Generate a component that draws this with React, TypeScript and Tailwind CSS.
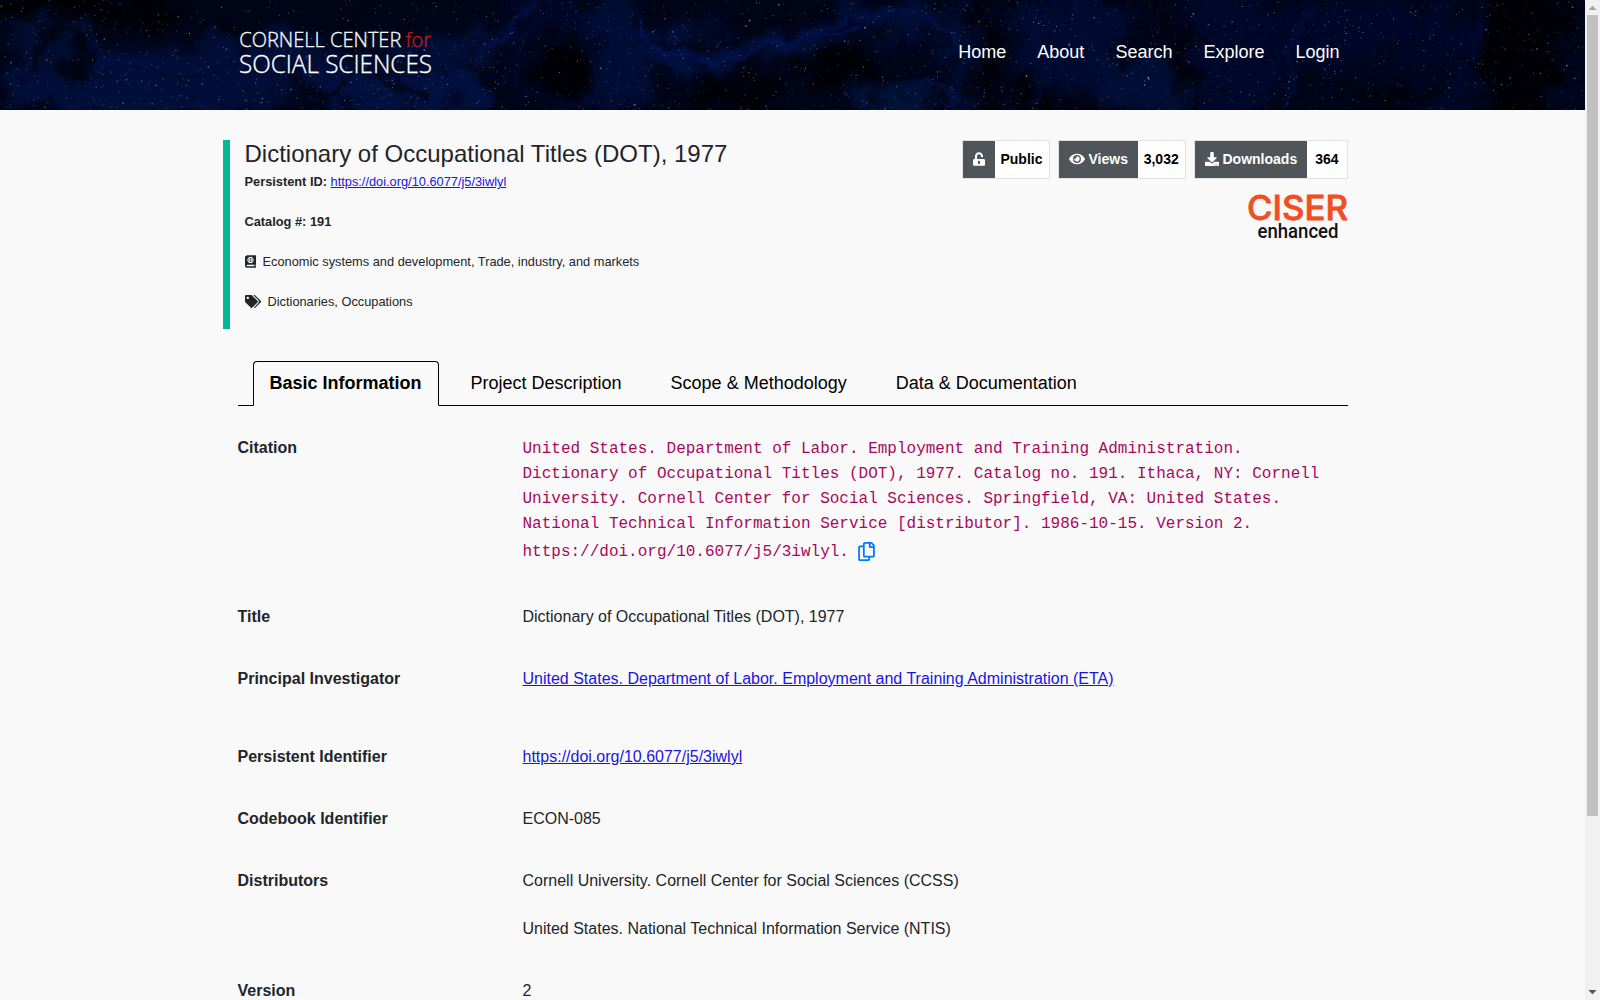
import type { ReactNode } from "react";
import { FaAtlas, FaDownload, FaEye, FaRegCopy, FaTags, FaUnlockAlt } from "react-icons/fa";

const DOI = "https://doi.org/10.6077/j5/3iwlyl";

const NAV = ["Home", "About", "Search", "Explore", "Login"];

const TABS = ["Project Description", "Scope & Methodology", "Data & Documentation"];

const CITATION = [
  "United States. Department of Labor. Employment and Training Administration.",
  "Dictionary of Occupational Titles (DOT), 1977. Catalog no. 191. Ithaca, NY: Cornell",
  "University. Cornell Center for Social Sciences. Springfield, VA: United States.",
  "National Technical Information Service [distributor]. 1986-10-15. Version 2.",
];

// cx, cy, rx, ry, fill
const CLOUDS: [number, number, number, number, string][] = [
  [150, 85, 150, 36, "#000e3a"],
  [50, 45, 38, 30, "#000c30"],
  [250, 60, 90, 28, "#000d36"],
  [400, 88, 90, 26, "#00103f"],
  [440, 48, 60, 14, "#000e36"],
  [560, 45, 60, 60, "#000727"],
  [620, 60, 26, 70, "#000c34"],
  [700, 48, 70, 20, "#000f3e"],
  [780, 42, 60, 10, "#00113f"],
  [575, 98, 24, 18, "#000b32"],
  [890, 20, 60, 14, "#000d36"],
  [890, 104, 46, 14, "#001238"],
  [960, 60, 14, 70, "#000b30"],
  [1070, 40, 55, 50, "#000a30"],
  [1150, 88, 60, 28, "#000e35"],
  [1230, 50, 60, 70, "#000728"],
  [1380, 35, 110, 40, "#000627"],
  [1400, 80, 80, 26, "#000520"],
  [1450, 100, 16, 26, "#000828"],
  [1565, 80, 22, 30, "#000622"],
];

const SHADOWS: [number, number, number, number][] = [
  [80, 6, 110, 16],
  [70, 62, 8, 20],
  [150, 16, 40, 12],
  [225, 33, 28, 7],
  [400, 72, 28, 4],
  [560, 70, 30, 34],
  [720, 40, 46, 4],
  [840, 64, 46, 18],
  [730, 94, 44, 14],
  [985, 60, 8, 70],
  [1040, 98, 26, 12],
  [1185, 50, 8, 40],
  [1390, 92, 50, 8],
  [1520, 30, 44, 110],
];

// thin currents running through the clouds
const CURRENTS: { d: string; stroke: string }[] = [
  { d: "M35 70C40 30 70 20 85 40S75 85 55 72", stroke: "#000209" },
  { d: "M290 65C300 100 330 105 345 85", stroke: "#000209" },
  { d: "M375 72C395 78 400 96 430 98", stroke: "#000209" },
  { d: "M480 60C500 30 520 20 535 0", stroke: "#001450" },
  { d: "M640 20C650 60 700 66 740 56S790 34 860 30", stroke: "#00155a" },
  { d: "M650 35C680 58 720 50 750 34S800 16 830 14", stroke: "#00020c" },
  { d: "M790 42C830 22 870 10 915 16S950 40 952 60", stroke: "#00134a" },
  { d: "M920 80C945 86 955 96 960 110", stroke: "#00134a" },
  { d: "M1030 0C1015 30 1050 60 1030 110", stroke: "#000c35" },
  { d: "M1160 0C1150 30 1200 50 1195 110", stroke: "#00020c" },
  { d: "M1290 110C1295 70 1280 40 1310 15", stroke: "#000d3a" },
  { d: "M1455 110C1460 70 1490 40 1480 0", stroke: "#000a30" },
];

function makeStars(count: number) {
  let seed = 7919;
  const rand = () => {
    seed = (seed * 16807) % 2147483647;
    return seed / 2147483647;
  };
  return Array.from({ length: count }, () => ({
    x: rand() * 1585,
    y: rand() * 110,
    size: rand() > 0.93 ? 1.5 : 1,
    opacity: 0.1 + rand() * rand() * 0.65,
    fill: rand() > 0.6 ? "#d9cbb0" : "#b4c6dc",
  }));
}

const STARS = makeStars(2200);

function NightSky() {
  return (
    <svg className="absolute inset-0 w-full h-full" viewBox="0 0 1585 110" preserveAspectRatio="none" aria-hidden="true">
      <defs>
        <filter id="swirl" x="-50" y="-50" width="1685" height="210" filterUnits="userSpaceOnUse" colorInterpolationFilters="sRGB">
          <feGaussianBlur stdDeviation="7" result="soft" />
          <feTurbulence type="fractalNoise" baseFrequency="0.03" numOctaves="5" seed="8" result="noise" />
          <feDisplacementMap in="soft" in2="noise" scale="55" xChannelSelector="R" yChannelSelector="G" />
        </filter>
        <filter id="current" x="-50" y="-50" width="1685" height="210" filterUnits="userSpaceOnUse" colorInterpolationFilters="sRGB">
          <feGaussianBlur stdDeviation="1.4" result="soft" />
          <feTurbulence type="fractalNoise" baseFrequency="0.04" numOctaves="4" seed="3" result="noise" />
          <feDisplacementMap in="soft" in2="noise" scale="22" xChannelSelector="R" yChannelSelector="G" />
        </filter>
        <filter id="wisps" x="0" y="0" width="1585" height="110" filterUnits="userSpaceOnUse" colorInterpolationFilters="sRGB">
          <feTurbulence type="turbulence" baseFrequency="0.02 0.026" numOctaves="5" seed="21" />
          <feColorMatrix values="0 0 0 0 0  0 0 0 0 0.005  0 0 0 0 0.03  -5 0 0 0 0.7" />
        </filter>
      </defs>
      <rect width="1585" height="110" fill="#00020f" />
      <g filter="url(#swirl)">
        <rect x="-60" y="-60" width="1705" height="230" fill="#000417" />
        {CLOUDS.map(([cx, cy, rx, ry, fill], i) => (
          <ellipse key={i} cx={cx} cy={cy} rx={rx} ry={ry} fill={fill} />
        ))}
        {SHADOWS.map(([cx, cy, rx, ry], i) => (
          <ellipse key={i} cx={cx} cy={cy} rx={rx} ry={ry} fill="#000106" />
        ))}
      </g>
      <g filter="url(#current)" fill="none" strokeWidth="5" opacity="0.7">
        {CURRENTS.map(({ d, stroke }) => (
          <path key={d} d={d} stroke={stroke} />
        ))}
      </g>
      <rect width="1585" height="110" filter="url(#wisps)" opacity="0.8" />
      {STARS.map((s, i) => (
        <rect key={i} x={s.x} y={s.y} width={s.size} height={s.size} fill={s.fill} opacity={s.opacity} />
      ))}
    </svg>
  );
}

function Header() {
  return (
    <header className="relative h-[110px] bg-[#00020f]">
      <NightSky />
      <div className="relative w-[1110px] mx-auto flex justify-between">
        <svg className="mt-4 h-[70px] w-[200px]" viewBox="0 -12 200 70" fontFamily="'Open Sans', sans-serif" fontWeight="300" strokeWidth="0.35">
          <text x="1.3" y="19" fontSize="21" fill="#f4f5f8" stroke="#f4f5f8" textLength="162" lengthAdjust="spacingAndGlyphs">
            CORNELL CENTER
          </text>
          <text x="167.5" y="19" fontSize="21" fill="#c41a1f" stroke="#c41a1f" textLength="25.5" lengthAdjust="spacingAndGlyphs">
            for
          </text>
          <text x="1" y="45.2" fontSize="26" fill="#ffffff" stroke="#ffffff" textLength="193" lengthAdjust="spacingAndGlyphs">
            SOCIAL SCIENCES
          </text>
        </svg>
        <nav className="flex gap-[31px] pt-[39px] pr-2 text-lg leading-[27px] text-white">
          {NAV.map((item) => (
            <a key={item} href="#">
              {item}
            </a>
          ))}
        </nav>
      </div>
    </header>
  );
}

function Badge({ icon, label, value, className }: { icon: ReactNode; label?: string; value: string; className: string }) {
  return (
    <div className={`flex h-[39px] border border-[#e1e1e1] bg-white text-sm font-bold ${className}`}>
      <div className="flex items-center gap-1 bg-[#50555a] px-[10px] text-white">
        {icon}
        {label && <span className="pb-0.5">{label}</span>}
      </div>
      <div className="flex flex-1 items-center justify-center pb-0.5 text-black">{value}</div>
    </div>
  );
}

function DatasetSummary() {
  return (
    <section className="mt-[30px] -ml-[15px] flex h-[189px] justify-between border-l-[7px] border-[#00b894] pl-[15px] text-[12.8px] leading-6">
      <div>
        <h1 className="mb-[3px] text-2xl leading-[27px]">Dictionary of Occupational Titles (DOT), 1977</h1>
        <p className="mb-4 font-bold">
          Persistent ID:{" "}
          <a href="#" className="font-normal text-[#1a15e0] underline">
            {DOI}
          </a>
        </p>
        <p className="mb-4 font-bold">Catalog #: 191</p>
        <p className="mb-4 flex items-center gap-[7px]">
          <FaAtlas className="mb-0.5 h-[13px] w-[11px]" />
          Economic systems and development, Trade, industry, and markets
        </p>
        <p className="flex items-center gap-[7px]">
          <FaTags className="mb-0.5 h-[13px] w-4" />
          Dictionaries, Occupations
        </p>
      </div>
      <div className="flex flex-col items-end">
        <div className="flex gap-2">
          <Badge icon={<FaUnlockAlt className="mb-px h-[14px] w-[12px]" />} value="Public" className="w-[88px]" />
          <Badge icon={<FaEye className="mb-px h-[14px] w-4" />} label="Views" value="3,032" className="w-[128px]" />
          <Badge icon={<FaDownload className="mb-px h-[14px] w-[14px]" />} label="Downloads" value="364" className="w-[154px]" />
        </div>
        <svg className="mt-[5px] h-[65px] w-[104px] -mr-0.5" viewBox="-2 -10 104 65">
          <text x="-1" y="26" fontFamily="Inter, sans-serif" fontWeight="500" fontSize="33.5" fill="#f04e23" stroke="#f04e23" strokeWidth="0.8" strokeLinejoin="round" textLength="101" lengthAdjust="spacingAndGlyphs">
            CISER
          </text>
          <text x="9.5" y="43.5" fontFamily="Roboto, sans-serif" fontWeight="500" fontSize="20.5" fill="#111111" textLength="81" lengthAdjust="spacingAndGlyphs">
            enhanced
          </text>
        </svg>
      </div>
    </section>
  );
}

function Tabs() {
  return (
    <div className="mt-8 flex h-[45px] border-b border-black pl-[15px] text-lg leading-[27px] text-black">
      <a href="#" className="-mb-px mr-[15px] rounded-t border border-b-[#f9f9f9] border-black px-4 py-2 font-bold">
        Basic Information
      </a>
      {TABS.map((tab) => (
        <a key={tab} href="#" className="mr-[15px] border border-transparent px-4 py-2">
          {tab}
        </a>
      ))}
    </div>
  );
}

function Row({ label, children, className = "mb-[38px]" }: { label: string; children: ReactNode; className?: string }) {
  return (
    <div className={`flex leading-6 ${className}`}>
      <div className="w-[285px] shrink-0 font-bold">{label}</div>
      <div className="flex-1">{children}</div>
    </div>
  );
}

function Details() {
  return (
    <section className="mt-[30px]">
      <Row label="Citation" className="mb-[38px]">
        <div className="whitespace-nowrap pt-px font-['Liberation_Mono',monospace] leading-[25px] text-[#a6095c]">
          {CITATION.map((line) => (
            <div key={line}>{line}</div>
          ))}
          <div className="flex h-[30px] items-center gap-[9px]">
            {DOI}.
            <FaRegCopy className="mb-0.5 h-[19px] w-[17px] text-[#007bff]" />
          </div>
        </div>
      </Row>
      <Row label="Title">Dictionary of Occupational Titles (DOT), 1977</Row>
      <Row label="Principal Investigator" className="mb-[54px]">
        <a href="#" className="text-[#1a15e0] underline">
          United States. Department of Labor. Employment and Training Administration (ETA)
        </a>
      </Row>
      <Row label="Persistent Identifier">
        <a href="#" className="text-[#1a15e0] underline">
          {DOI}
        </a>
      </Row>
      <Row label="Codebook Identifier">ECON-085</Row>
      <Row label="Distributors">
        <p className="mb-6">Cornell University. Cornell Center for Social Sciences (CCSS)</p>
        <p>United States. National Technical Information Service (NTIS)</p>
      </Row>
      <Row label="Version">2</Row>
    </section>
  );
}

function Scrollbar() {
  return (
    <div className="flex w-[15px] flex-col items-center justify-between bg-[#f1f1f1]">
      <svg className="h-[15px] w-[15px]" viewBox="0 0 15 15">
        <path d="M3.5 10h8L7.5 5.8z" fill="#a3a3a3" />
      </svg>
      <div className="w-[11px] flex-1">
        <div className="h-[801px] bg-[#c1c1c1]" />
      </div>
      <svg className="h-[15px] w-[15px]" viewBox="0 0 15 15">
        <path d="M3.5 5h8L7.5 9.2z" fill="#505050" />
      </svg>
    </div>
  );
}

export default function App() {
  return (
    <div className="flex h-[1000px] w-[1600px] overflow-hidden bg-[#f9f9f9] font-['Liberation_Sans',Arial,sans-serif] text-base text-[#212529]">
      <div className="h-[1000px] w-[1585px] overflow-hidden">
        <Header />
        <main className="mx-auto w-[1110px]">
          <DatasetSummary />
          <Tabs />
          <Details />
        </main>
      </div>
      <Scrollbar />
    </div>
  );
}
